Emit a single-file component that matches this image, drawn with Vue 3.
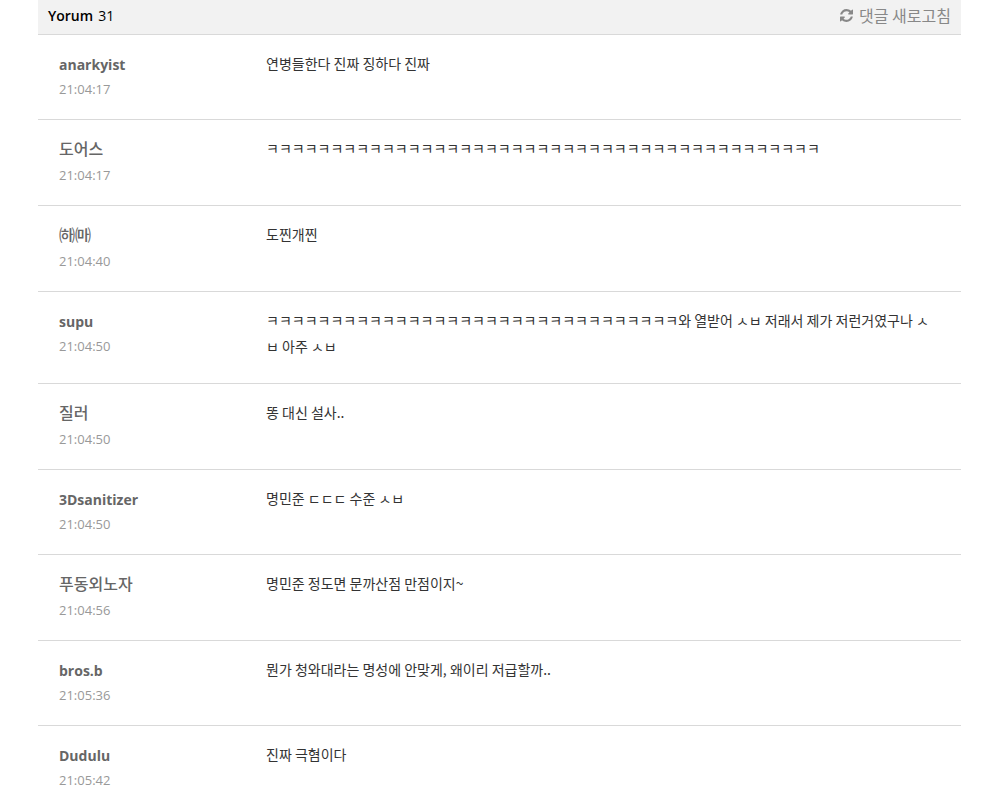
<script setup>
const total = 31

const comments = [
  { name: 'anarkyist', time: '21:04:17', text: '연병들한다 진짜 징하다 진짜' },
  { name: '도어스', time: '21:04:17', text: 'ㅋ'.repeat(43) },
  { name: '㈛㈒', time: '21:04:40', text: '도찐개찐' },
  { name: 'supu', time: '21:04:50', text: 'ㅋ'.repeat(32) + '와 열받어 ㅅㅂ 저래서 제가 저런거였구나 ㅅㅂ 아주 ㅅㅂ' },
  { name: '질러', time: '21:04:50', text: '똥 대신 설사..' },
  { name: '3Dsanitizer', time: '21:04:50', text: '명민준 ㄷㄷㄷ 수준 ㅅㅂ' },
  { name: '푸동외노자', time: '21:04:56', text: '명민준 정도면 문까산점 만점이지~' },
  { name: 'bros.b', time: '21:05:36', text: '뭔가 청와대라는 명성에 안맞게, 왜이리 저급할까..' },
  { name: 'Dudulu', time: '21:05:42', text: '진짜 극혐이다' },
]

const isLatin = (name) => /^[\x20-\x7e]+$/.test(name)
</script>

<template>
  <section class="comments">
    <header class="bar">
      <h2 class="title">Yorum <span class="count">{{ total }}</span></h2>
      <button type="button" class="refresh">
        <svg class="icon" viewBox="0 0 1536 1536" aria-hidden="true">
          <path d="M1511 928q0 5-1 7-64 268-268 434.500t-478 166.500q-146 0-282.500-55t-243.500-157l-129 129q-19 19-45 19t-45-19-19-45v-448q0-26 19-45t45-19h448q26 0 45 19t19 45-19 45l-137 137q71 66 161 102t187 36q134 0 250-65t186-179q11-17 53-117 8-23 30-23h192q13 0 22.500 9.500t9.500 22.500zm25-800v448q0 26-19 45t-45 19h-448q-26 0-45-19t-19-45 19-45l138-138q-148-137-349-137-134 0-250 65t-186 179q-11 17-53 117-8 23-30 23h-199q-13 0-22.500-9.500t-9.500-22.500v-7q65-268 270-434.500t480-166.500q146 0 284 55.500t245 156.500l130-129q19-19 45-19t45 19 19 45z" />
        </svg>
        <span>댓글 새로고침</span>
      </button>
    </header>
    <ul class="list">
      <li v-for="(c, i) in comments" :key="i" class="row">
        <div class="author">
          <strong class="name" :class="{ latin: isLatin(c.name) }">{{ c.name }}</strong>
          <time class="time">{{ c.time }}</time>
        </div>
        <p class="text">{{ c.text }}</p>
      </li>
    </ul>
  </section>
</template>

<style>
html {
  overflow: hidden;
}

body {
  background: #fff;
}
</style>

<style scoped>
.comments {
  margin: 0 43px 0 38px;
  font-family: "Open Sans", "Noto Sans CJK KR", sans-serif;
  color: #333;
}

.bar {
  display: flex;
  align-items: flex-start;
  justify-content: space-between;
  padding: 4px 10px 6px;
  background: #f2f2f2;
  border-bottom: 1px solid #d9d9d9;
}

.title {
  display: flex;
  gap: 5px;
  margin: 0;
  font-size: 14px;
  line-height: 24px;
  font-weight: 600;
  color: #000;
}

.count {
  font-weight: 400;
}

.refresh {
  display: flex;
  align-items: center;
  gap: 6px;
  padding: 0;
  border: 0;
  background: none;
  font-family: "Noto Sans CJK KR", sans-serif;
  font-size: 16px;
  line-height: 22px;
  color: #888;
  cursor: pointer;
}

.icon {
  width: 13px;
  height: 13px;
  fill: currentColor;
}

.list {
  margin: 0;
  padding: 0;
  list-style: none;
}

.row {
  display: flex;
  border-bottom: 1px solid #d9d9d9;
}

.author {
  flex: 0 0 207px;
  display: flex;
  flex-direction: column;
  padding: 17px 0 18px 21px;
}

.name {
  margin-bottom: 4px;
  font-family: "Noto Sans CJK KR", sans-serif;
  font-size: 16px;
  line-height: 22px;
  font-weight: 500;
  color: #666;
}

.name.latin {
  margin-bottom: 0;
  font-family: "Open Sans", sans-serif;
  font-size: 14px;
  line-height: 25px;
  font-weight: 700;
}

.time {
  font-size: 13px;
  line-height: 24px;
  color: #999;
}

.text {
  flex: 1;
  margin: 0;
  padding: 15px 25px 24px 0;
  font-family: "Noto Sans CJK KR", sans-serif;
  font-size: 14px;
  line-height: 26px;
  color: #333;
}
</style>
